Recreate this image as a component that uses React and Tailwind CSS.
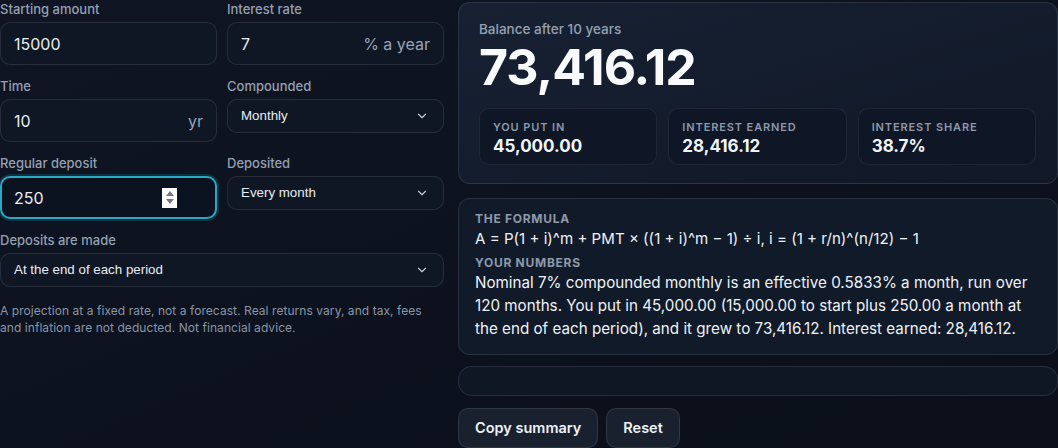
import { ChevronDown } from "lucide-react";

function Label({ children }) {
  return <div className="text-[13px] leading-[18px] font-medium text-[#94a0b2] mb-1">{children}</div>;
}

function TextField({ label, value, suffix, focused }) {
  return (
    <div>
      <Label>{label}</Label>
      <div
        className={
          focused
            ? "h-[43px] flex items-center rounded-[10px] border-2 border-[#2aa8c4] bg-[#0c1320] pl-[12px] pr-[38px] shadow-[0_0_0_2px_rgba(34,170,200,0.18)]"
            : "h-[43px] flex items-center rounded-[10px] border border-white/10 bg-[#0f1624] px-[13px]"
        }
      >
        <span className="flex-1 text-[16px] text-[#e8edf4]">{value}</span>
        {suffix && <span className="text-[16px] text-[#9aa5b6]">{suffix}</span>}
        {focused && (
          <span className="flex flex-col items-center justify-center gap-[3px] w-[15px] h-[20px] bg-white">
            <span className="w-0 h-0 border-x-[4px] border-x-transparent border-b-[5px] border-b-[#777]" />
            <span className="w-0 h-0 border-x-[4px] border-x-transparent border-t-[5px] border-t-[#777]" />
          </span>
        )}
      </div>
    </div>
  );
}

function SelectField({ label, value }) {
  return (
    <div>
      <Label>{label}</Label>
      <div className="h-[34px] flex items-center justify-between rounded-[10px] border border-white/10 bg-[#0f1624] pl-[13px] pr-[14px]">
        <span className="text-[13.33px] text-[#e8edf4]" style={{ fontFamily: "'Liberation Sans', Arial, sans-serif" }}>
          {value}
        </span>
        <ChevronDown size={14} strokeWidth={2} className="text-[#c2cad6]" />
      </div>
    </div>
  );
}

function Stat({ label, value }) {
  return (
    <div className="h-[57px] rounded-[10px] border border-white/[0.07] bg-[#0f1626] px-[13px] pt-[11px]">
      <div className="text-[11px] leading-[15px] font-semibold tracking-[0.08em] uppercase text-[#8e99aa]">{label}</div>
      <div className="text-[17px] leading-[22px] font-bold text-[#f1f5f9]">{value}</div>
    </div>
  );
}

export default function App() {
  return (
    <div
      className="w-[1058px] h-[448px] overflow-hidden bg-gradient-to-br from-[#0f1523] to-[#0a0f19] text-white"
      style={{ fontFamily: "Inter, 'Noto Sans', sans-serif" }}
    >
      <div className="grid grid-cols-[444px_1fr] gap-[14px]">
        <div>
          <div className="grid grid-cols-2 gap-x-[10px] gap-y-[12px]">
            <TextField label="Starting amount" value="15000" />
            <TextField label="Interest rate" value="7" suffix="% a year" />
            <TextField label="Time" value="10" suffix="yr" />
            <SelectField label="Compounded" value="Monthly" />
            <TextField label="Regular deposit" value="250" focused />
            <SelectField label="Deposited" value="Every month" />
          </div>
          <div className="mt-[12px]">
            <SelectField label="Deposits are made" value="At the end of each period" />
          </div>
          <p className="mt-[15px] pr-[16px] text-[12px] leading-[17px] tracking-[0.005em] text-[#8a95a6]">
            A projection at a fixed rate, not a forecast. Real returns vary, and tax, fees and inflation are not deducted. Not financial advice.
          </p>
        </div>

        <div className="pt-[2px] flex flex-col">
          <div className="rounded-[12px] border border-white/10 bg-gradient-to-br from-[#172133] to-[#111827] px-[20px] pt-[17px] pb-[18px]">
            <div className="text-[13.5px] leading-[18px] font-medium text-[#95a1b3]">Balance after 10 years</div>
            <div className="text-[50px] leading-[58px] font-bold tracking-[-0.02em] text-[#f8fafc] mb-[12px]">73,416.12</div>
            <div className="grid grid-cols-3 gap-[11px] pr-[1px]">
              <Stat label="You put in" value="45,000.00" />
              <Stat label="Interest earned" value="28,416.12" />
              <Stat label="Interest share" value="38.7%" />
            </div>
          </div>

          <div className="mt-[14px] rounded-[12px] border border-white/10 bg-[#111a29] px-[16px] pt-[12px] pb-[14px]">
            <div className="text-[12px] leading-[16px] font-bold tracking-[0.06em] uppercase text-[#8e99aa]">The formula</div>
            <div className="mt-[1px] text-[15.1px] leading-[21px] text-[#eef2f7]">
              A = P(1 + i)^m + PMT × ((1 + i)^m − 1) ÷ i, i = (1 + r/n)^(n/12) − 1
            </div>
            <div className="mt-[6px] text-[12px] leading-[16px] font-bold tracking-[0.06em] uppercase text-[#8e99aa]">Your numbers</div>
            <p className="text-[15.2px] leading-[23px] text-[#eef2f7]">
              Nominal 7% compounded monthly is an effective 0.5833% a month, run over 120 months. You put in 45,000.00 (15,000.00 to start plus 250.00 a month at the end of each period), and it grew to 73,416.12. Interest earned: 28,416.12.
            </p>
          </div>

          <div className="mt-[11px] h-[30px] rounded-[14px] border border-white/10 bg-[#0f1624]" />

          <div className="mt-[12px] flex gap-[8px]">
            <button className="h-[40px] px-[16px] rounded-[10px] border border-white/10 bg-[#19212f] text-[14.5px] font-semibold text-[#eef2f7]">
              Copy summary
            </button>
            <button className="h-[40px] px-[16px] rounded-[10px] border border-white/10 bg-[#19212f] text-[14.5px] font-semibold text-[#eef2f7]">
              Reset
            </button>
          </div>
        </div>
      </div>
    </div>
  );
}
